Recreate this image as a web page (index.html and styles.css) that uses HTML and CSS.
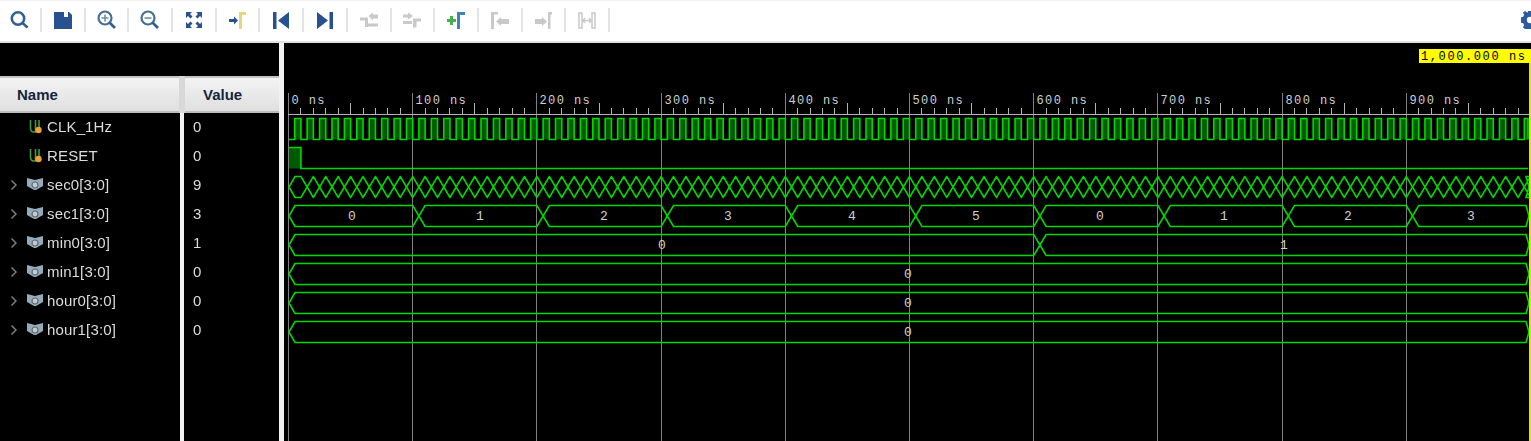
FILE: index.html
```html
<!DOCTYPE html>
<html>
<head>
<title>Waveform</title>
<link rel="stylesheet" href="styles.css">
<script type="text/javascript" src="script.js"></script>
</head>

<body>

<svg class="defs" width="0" height="0">
	<symbol id="wire" viewBox="0 0 16 16">
		<path class="wire-line" d="M2.5 1V9Q2.5 13 6 13H7.5V1M11 1V8"/>
		<circle class="wire-dot" cx="10.5" cy="11" r="3.2"/>
	</symbol>
	<symbol id="bus" viewBox="0 0 16 16">
		<path class="bus-body" d="M0 1L8 3L16 1V9L9 13H7L0 9Z"/>
		<circle class="bus-dot" cx="8" cy="8" r="3"/>
	</symbol>
	<symbol id="chevron" viewBox="0 0 8 12">
		<path class="chevron-line" d="M1.5 1.5L6 6L1.5 10.5"/>
	</symbol>
</svg>

<div id="toolbar">
	<div class="tool">
		<svg viewBox="0 0 20 20"><circle class="ic-ring" cx="8" cy="8.5" r="6.2"/><path class="ic-ring" d="M12.5 13L17.5 17.5"/></svg>
	</div>
	<div class="tool">
		<svg viewBox="0 0 20 20"><path class="ic-blue" d="M1 2H16L19 5V19H1Z"/><path class="ic-white" d="M11 2H15V7H11Z"/></svg>
	</div>
	<div class="tool">
		<svg viewBox="0 0 20 20"><circle class="ic-ring-soft" cx="8" cy="8" r="6.5"/><path class="ic-thin" d="M4.5 8H11.5M8 4.5V11.5"/><path class="ic-ring" d="M12.5 12.5L18 18"/></svg>
	</div>
	<div class="tool">
		<svg viewBox="0 0 20 20"><circle class="ic-ring-soft" cx="8" cy="8" r="6.5"/><path class="ic-thin" d="M4.5 8H11.5"/><path class="ic-ring" d="M12.5 12.5L18 18"/></svg>
	</div>
	<div class="tool">
		<svg viewBox="0 0 20 20"><path class="ic-blue" d="M2 2H8L6 4L8.500 6.500L6.500 8.500L4 6L2 8ZM18 2V8L16 6L13.500 8.500L11.500 6.500L14 4L12 2ZM2 18V12L4 14L6.500 11.500L8.500 13.500L6 16L8 18ZM18 18H12L14 16L11.500 13.500L13.500 11.500L16 14L18 12Z"/></svg>
	</div>
	<div class="tool">
		<svg viewBox="0 0 20 20"><path class="ic-blue" d="M1 9H6V6.500L10 10.500L6 14.500V12H1Z"/><path class="ic-yellow" d="M11 2H18V5H14V19H11Z"/></svg>
	</div>
	<div class="tool">
		<svg viewBox="0 0 20 20"><path class="ic-blue" d="M2 2H5.500V19H2ZM18 2V19L7 10.500Z"/></svg>
	</div>
	<div class="tool">
		<svg viewBox="0 0 20 20"><path class="ic-blue" d="M18 2H14.500V19H18ZM2 2V19L13 10.500Z"/></svg>
	</div>
	<div class="tool">
		<svg viewBox="0 0 20 20"><path class="ic-gray" d="M1 7.500H9V17H6V10.500H1ZM9.500 6L14 2.500V4.500H19V8.500H14V10.500ZM9 13.500H19V16.500H9Z"/></svg>
	</div>
	<div class="tool">
		<svg viewBox="0 0 20 20"><path class="ic-gray" d="M1 4.500H6V2.500L11 6L6 9.500V7.500H1ZM1 11H10V14H1ZM11 8.500H19V11.500H14.500V17.500H11Z"/></svg>
	</div>
	<div class="tool">
		<svg viewBox="0 0 20 20"><path class="ic-green" d="M1 9H4V6H7V9H10V12H7V15H4V12H1Z"/><path class="ic-steel" d="M11 2H19V5H14V19H11Z"/></svg>
	</div>
	<div class="tool">
		<svg viewBox="0 0 20 20"><path class="ic-gray" d="M1 2H8V4.500H4V19H1ZM6 11.500L11 7V9H19V14H11V16Z"/></svg>
	</div>
	<div class="tool">
		<svg viewBox="0 0 20 20"><path class="ic-gray" d="M14 11.500L9 7V9H2V14H9V16ZM15 2H19V4.500H17.500V19H15Z"/></svg>
	</div>
	<div class="tool">
		<svg viewBox="0 0 20 20"><path class="ic-gray-line" d="M2 3H5V18H2ZM18 3H15V18H18ZM6 10.500H14M8 8L6 10.500L8 13M12 8L14 10.500L12 13"/></svg>
	</div>
	<div class="tool-end">
		<svg viewBox="0 0 20 20"><path class="ic-gear" d="M8 0H12L12.500 3L15 4L17.500 2.300L20 5L18 7.500L19 10L20 10.500V13L17.500 13.500L16.500 16L18 18L15.500 20H4.500L2 18L3.500 16L2.500 13.500L0 13V7L2.500 6.500L3.500 4L2 2L4.500 0L7 2Z"/><circle class="ic-white" cx="10" cy="10" r="3.500"/></svg>
	</div>
</div><!-- end toolbar -->

<div id="main">

	<div id="names">
		<div class="names-top"></div>

		<div class="names-head">
			<div class="head-cell head-name">Name</div>
			<div class="head-gap"></div>
			<div class="head-cell head-value">Value</div>
		</div>

		<div class="names-body">
			<div class="col-name">
				<div class="row"><span class="twist"></span><svg class="sig"><use href="#wire"/></svg>CLK_1Hz</div>
				<div class="row"><span class="twist"></span><svg class="sig"><use href="#wire"/></svg>RESET</div>
				<div class="row"><svg class="twist"><use href="#chevron"/></svg><svg class="sig sig-bus"><use href="#bus"/></svg>sec0[3:0]</div>
				<div class="row"><svg class="twist"><use href="#chevron"/></svg><svg class="sig sig-bus"><use href="#bus"/></svg>sec1[3:0]</div>
				<div class="row"><svg class="twist"><use href="#chevron"/></svg><svg class="sig sig-bus"><use href="#bus"/></svg>min0[3:0]</div>
				<div class="row"><svg class="twist"><use href="#chevron"/></svg><svg class="sig sig-bus"><use href="#bus"/></svg>min1[3:0]</div>
				<div class="row"><svg class="twist"><use href="#chevron"/></svg><svg class="sig sig-bus"><use href="#bus"/></svg>hour0[3:0]</div>
				<div class="row"><svg class="twist"><use href="#chevron"/></svg><svg class="sig sig-bus"><use href="#bus"/></svg>hour1[3:0]</div>
			</div>
			<div class="col-gap"></div>
			<div class="col-value">
				<div class="row">0</div>
				<div class="row">0</div>
				<div class="row">9</div>
				<div class="row">3</div>
				<div class="row">1</div>
				<div class="row">0</div>
				<div class="row">0</div>
				<div class="row">0</div>
			</div>
		</div>
	</div><!-- end names -->

	<div id="sash"></div>

	<div id="wave">
		<svg id="waveSvg" viewBox="284 43 1247 398" width="1247" height="398"></svg>
	</div>

</div><!-- end main -->

</body>
</html>
```

FILE: styles.css
```css
* {
	margin: 0;
	padding: 0;
	box-sizing: border-box;
}

html, body {
	width: 1531px;
	height: 441px;
	overflow: hidden;
	background: #000;
	font-family: "Liberation Sans", Arial, sans-serif;
}

.defs {
	display: block;
	height: 0;
}

#toolbar {
	display: flex;
	height: 43px;
	background: #fff;
	border-top: 1px solid #f0f0f0;
	border-bottom: 2px solid #e2e2e2;
	filter: blur(0.4px);
}

.tool {
	flex: 0 0 43.7px;
	height: 24px;
	margin-top: 7px;
	border-right: 2px solid #e4e4e4;
	display: flex;
	align-items: center;
	justify-content: center;
}

.tool:first-child {
	flex-basis: 42px;
}

.tool svg {
	width: 20px;
	height: 20px;
	flex: none;
}

.tool-end {
	margin-left: auto;
	margin-top: 10px;
	width: 10px;
	height: 18px;
	overflow: hidden;
}

.tool-end svg {
	width: 18px;
	height: 18px;
	display: block;
}

.ic-ring {
	fill: none;
	stroke: #2f5f94;
	stroke-width: 2.6;
}

.ic-ring-soft {
	fill: none;
	stroke: #46708f;
	stroke-width: 2.2;
}

.ic-thin {
	fill: none;
	stroke: #6f8fa8;
	stroke-width: 1.6;
}

.ic-blue {
	fill: #27528f;
}

.ic-white {
	fill: #fff;
}

.ic-yellow {
	fill: #e8d67e;
}

.ic-gray {
	fill: #c9c9c9;
}

.ic-gray-line {
	fill: none;
	stroke: #c9c9c9;
	stroke-width: 1.5;
}

.ic-green {
	fill: #47b04f;
}

.ic-steel {
	fill: #3d83b5;
}

.ic-gear {
	fill: #2c5c9c;
}

#main {
	display: flex;
	height: 398px;
}

#names {
	width: 279px;
	flex: none;
	filter: blur(0.3px);
}

.names-top {
	height: 33px;
}

.names-head {
	display: flex;
	height: 37px;
	background: #fff;
}

.head-cell {
	background: linear-gradient(#f3f3f3, #dfdfdf);
	border-top: 2px solid #c4c4c4;
	border-bottom: 2px solid #bdbdbd;
	font-size: 15px;
	font-weight: bold;
	color: #16253c;
	line-height: 34px;
}

.head-name {
	width: 179px;
	padding-left: 17px;
}

.head-gap {
	width: 6px;
	background: #d8d8d8;
}

.head-value {
	width: 94px;
	padding-left: 18px;
}

.names-body {
	display: flex;
	height: 328px;
}

.col-name {
	width: 180px;
}

.col-gap {
	width: 4px;
	background: #f2f2f2;
}

.col-value {
	width: 95px;
	padding-left: 9px;
}

.row {
	height: 29px;
	padding-bottom: 2px;
	display: flex;
	align-items: center;
	font-size: 15px;
	letter-spacing: 0.15px;
	color: #dcdcdc;
}

.twist {
	width: 8px;
	height: 12px;
	margin-left: 10px;
	flex: none;
}

.sig {
	width: 16px;
	height: 16px;
	margin: 0 3px 0 10px;
	flex: none;
}

.sig-bus {
	margin: 0 4px 0 9px;
}

.wire-line {
	fill: none;
	stroke: #3f9a45;
	stroke-width: 1.6;
}

.wire-dot {
	fill: #f0a030;
}

.bus-body {
	fill: #93acbc;
}

.bus-dot {
	fill: #c8c8c8;
	stroke: #5c6a74;
	stroke-width: 1.2;
}

.chevron-line {
	fill: none;
	stroke: #7c7c7c;
	stroke-width: 1.5;
}

#sash {
	width: 5px;
	flex: none;
	background: #f2f2f2;
}

#wave {
	width: 1247px;
	flex: none;
}

#waveSvg {
	display: block;
}

.grid {
	stroke: #808080;
	stroke-width: 1;
}

.ruler {
	stroke: #b4b4b4;
	stroke-width: 1;
}

.ruler-text {
	font-family: "Liberation Mono", monospace;
	font-size: 12px;
	letter-spacing: 1.4px;
	fill: #d0d0d0;
}

.bus-text {
	font-family: "Liberation Mono", monospace;
	font-size: 13px;
	fill: #d0d0d0;
	text-anchor: middle;
}

.trace {
	fill: none;
	stroke: #00d800;
	stroke-width: 1.6;
}

.trace-fill {
	fill: #005a00;
	stroke: none;
}

.cursor {
	stroke: #e8e000;
	stroke-width: 2;
}

.cursor-box {
	fill: #ffff00;
}

.cursor-text {
	font-family: "Liberation Mono", monospace;
	font-size: 12px;
	letter-spacing: 1.6px;
	fill: #000;
}
```

FILE: script.js
```js
var NS = 'http://www.w3.org/2000/svg';
var X0 = 288.5;
var PER_NS = 1.242;
var X_END = 1528;
var HALF = 6.2;

var nsX = function (t) {return X0 + t * PER_NS;}

var add = function (svg, tag, cls, attrs, text)
{
	var el = document.createElementNS(NS, tag);
	el.setAttribute('class', cls);
	for (var k in attrs) {
		el.setAttribute(k, attrs[k]);
	}
	if (text !== undefined) {
		el.textContent = text;
	}
	svg.appendChild(el);
	return el;
}

var line = function (svg, cls, x1, y1, x2, y2)
{
	return add(svg, 'line', cls, {x1: x1, y1: y1, x2: x2, y2: y2});
}

var drawRuler = function (svg)
{
	line(svg, 'grid', 288.5, 93, 288.5, 441);
	for (var t = 0; t < 1000; t += 10) {
		var x = Math.floor(nsX(t)) + 0.5;
		if (t % 100 == 0) {
			line(svg, 'grid', x, 93, x, 441);
			add(svg, 'text', 'ruler-text', {x: x + 3, y: 104}, t + ' ns');
		} else {
			line(svg, 'ruler', x, t % 50 == 0 ? 103 : 108, x, 114);
		}
	}
	line(svg, 'ruler', 288, 114.5, 1529, 114.5);
}

var drawClock = function (svg, top, bottom)
{
	var d = 'M289 ' + bottom;
	for (var t = 5; t < 1000; t += 10) {
		var a = nsX(t);
		var b = Math.min(nsX(t + 5), X_END);
		add(svg, 'rect', 'trace-fill', {x: a, y: top, width: b - a, height: bottom - top});
		d += 'H' + a + 'V' + top + 'H' + b + 'V' + bottom;
	}
	add(svg, 'path', 'trace', {d: d + 'H' + X_END});
}

var drawReset = function (svg, top, bottom)
{
	var end = nsX(10);
	add(svg, 'rect', 'trace-fill', {x: 289, y: top, width: end - 289, height: bottom - top});
	add(svg, 'path', 'trace', {d: 'M289 ' + top + 'H' + end + 'V' + bottom + 'H' + X_END});
}

// one rail of a bus, it swaps sides on every edge
var busRail = function (start, other, mid, edges)
{
	var cur = start;
	var d = 'M289 ' + mid + 'L295 ' + cur;
	for (var i = 0; i < edges.length; i++) {
		var c = nsX(edges[i] + 5);
		var next = cur == start ? other : start;
		d += 'L' + (c - HALF) + ' ' + cur + 'L' + (c + HALF) + ' ' + next;
		cur = next;
	}
	return d + 'L1526 ' + cur + 'L1529 ' + mid;
}

// edges are times in ns where the bus value changes
var drawBus = function (svg, top, bottom, edges)
{
	var mid = (top + bottom) / 2;
	add(svg, 'path', 'trace', {d: busRail(top, bottom, mid, edges)});
	add(svg, 'path', 'trace', {d: busRail(bottom, top, mid, edges)});
}

var busLabels = function (svg, y, labels)
{
	for (var i = 0; i < labels.length; i++) {
		add(svg, 'text', 'bus-text', {x: labels[i][0], y: y + 4}, labels[i][1]);
	}
}

window.onload = function ()
{
	var svg = document.getElementById('waveSvg');
	var k;

	drawRuler(svg);
	drawClock(svg, 118.5, 139.5);
	drawReset(svg, 147.5, 168.5);

	var fast = [];
	for (k = 10; k < 1000; k += 10) {
		fast.push(k);
	}
	drawBus(svg, 176.5, 197.5, fast);

	var tens = [];
	for (k = 100; k < 1000; k += 100) {
		tens.push(k);
	}
	drawBus(svg, 205.5, 226.5, tens);
	busLabels(svg, 216, [[352, '0'], [480, '1'], [604, '2'], [728, '3'], [852, '4'], [976, '5'], [1100, '0'], [1224, '1'], [1348, '2'], [1471, '3']]);

	drawBus(svg, 234.5, 255.5, [600]);
	busLabels(svg, 245, [[662, '0'], [1284, '1']]);

	drawBus(svg, 263.5, 284.5, []);
	busLabels(svg, 274, [[908, '0']]);
	drawBus(svg, 292.5, 313.5, []);
	busLabels(svg, 303, [[908, '0']]);
	drawBus(svg, 321.5, 342.5, []);
	busLabels(svg, 332, [[908, '0']]);

	line(svg, 'cursor', 1530, 63, 1530, 441);
	add(svg, 'rect', 'cursor-box', {x: 1419, y: 49, width: 112, height: 14});
	add(svg, 'text', 'cursor-text', {x: 1421, y: 60}, '1,000.000 ns');
}
```
